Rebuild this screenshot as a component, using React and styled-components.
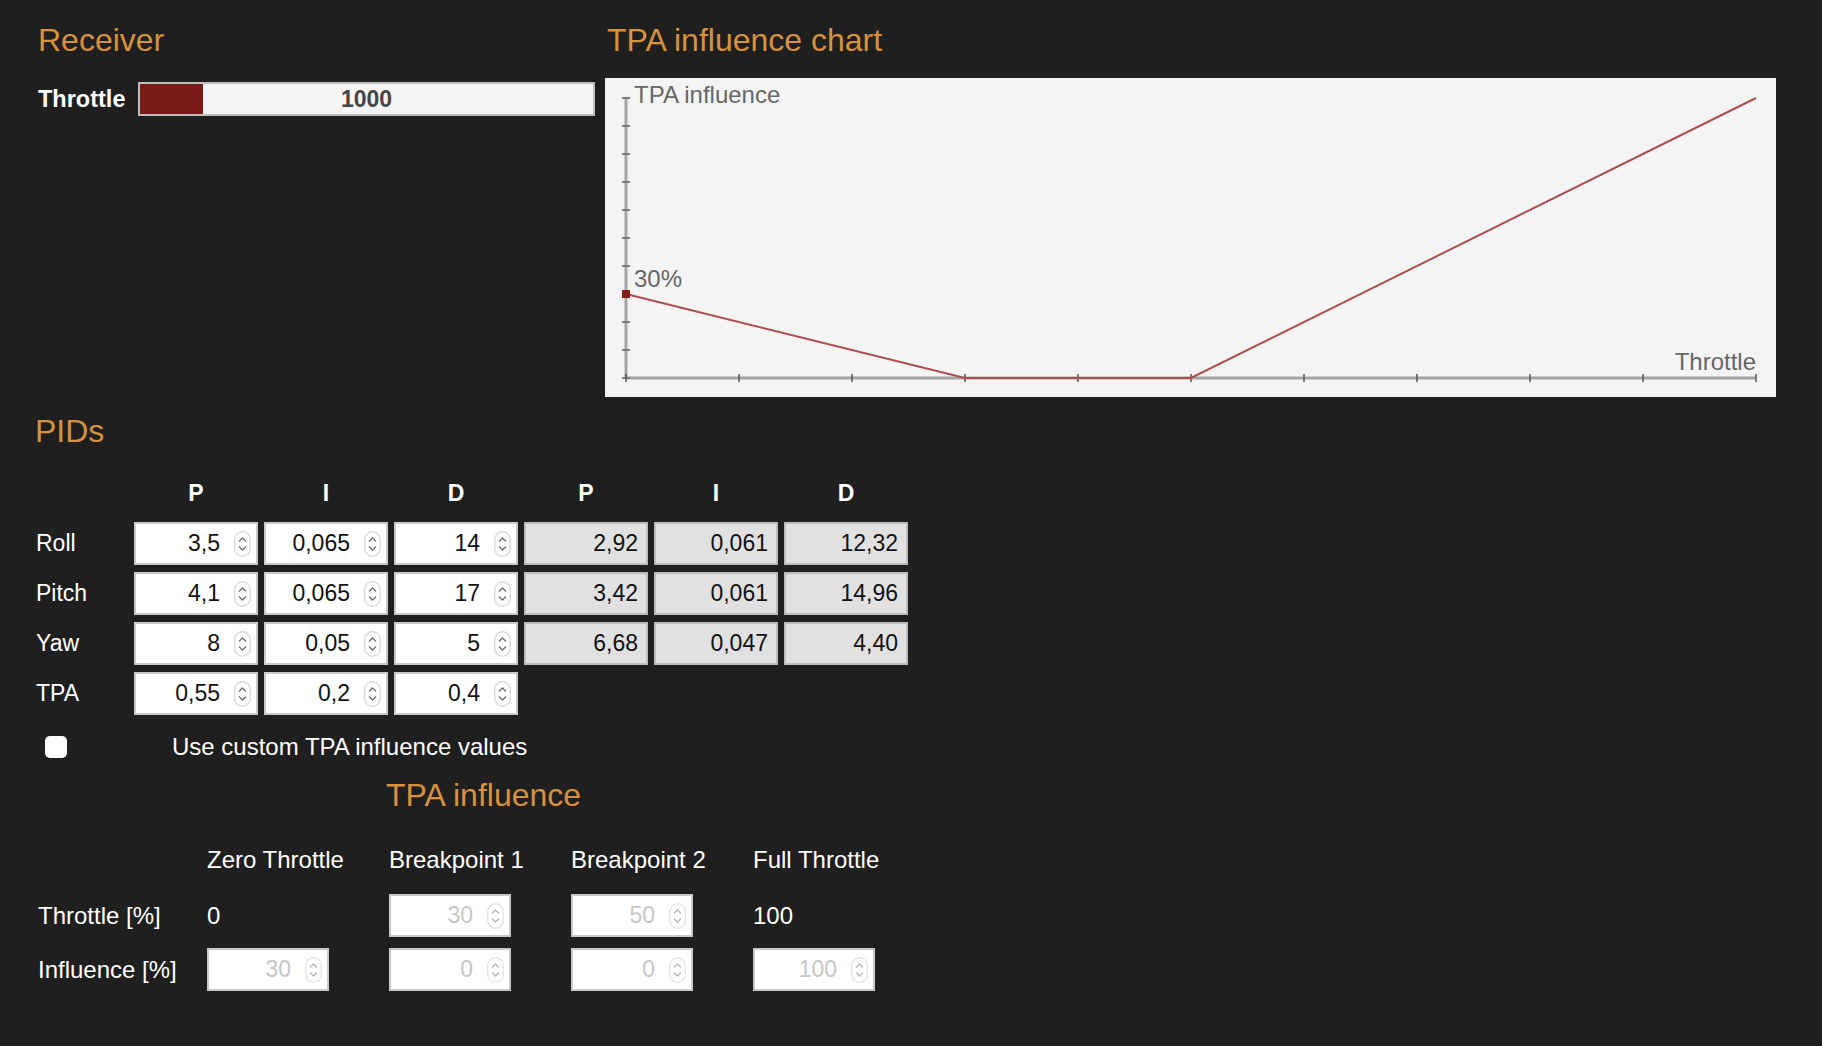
import React from 'react';
import styled, { createGlobalStyle } from 'styled-components';

const GlobalStyle = createGlobalStyle`
    body {
        margin: 0;
        background: #1f1f1f;
        color: #ffffff;
        font-family: "Liberation Sans", Arial, sans-serif;
    }
`;

const Page = styled.div`
    padding: 20px 0 20px 36px;
`;

const TopRow = styled.div`
    display: flex;
    align-items: flex-start;
`;

const ReceiverPanel = styled.section`
    width: 559px;
`;

const ChartPanel = styled.section`
    margin-left: 10px;
    width: 1171px;
`;

const Heading = styled.h2`
    margin: ${p => p.$top || 0}px 0 0 ${p => p.$left || 0}px;
    font-size: 32px;
    font-weight: 400;
    line-height: 40px;
    color: #d8913f;
`;

const ThrottleRow = styled.div`
    display: flex;
    align-items: center;
    margin-top: 22px;
`;

const BarLabel = styled.span`
    width: 100px;
    padding-left: 2px;
    font-size: 23.5px;
    font-weight: 700;
`;

const Bar = styled.div`
    position: relative;
    flex: 1;
    display: flex;
    height: 34px;
    box-sizing: border-box;
    border: 2px solid #bdbdbd;
    background: #f4f4f4;
`;

const BarFill = styled.div`
    height: 100%;
    background: #781a16;
`;

const BarValue = styled.span`
    position: absolute;
    inset: 0;
    display: flex;
    align-items: center;
    justify-content: center;
    font-size: 23px;
    font-weight: 700;
    color: #454545;
`;

const ChartBox = styled.div`
    margin-top: 18px;
    height: 319px;
    background: #f4f4f4;

    svg {
        display: block;
    }
`;

const PidGrid = styled.div`
    display: grid;
    grid-template-columns: 92px repeat(6, 124px);
    grid-template-rows: 40px repeat(4, 43px);
    column-gap: 6px;
    row-gap: 7px;
    margin-top: 24px;
`;

const HeadCell = styled.div`
    font-size: ${p => (p.$bold ? 23 : 24)}px;
    font-weight: ${p => (p.$bold ? 700 : 400)};
    line-height: ${p => p.$line || 36}px;
    text-align: ${p => p.$align || 'center'};
    white-space: nowrap;
`;

const RowLabel = styled.div`
    display: flex;
    align-items: center;
    padding-left: ${p => p.$pad || 0}px;
    font-size: ${p => p.$size || 23}px;
    white-space: nowrap;
`;

const NumberBox = styled.div`
    display: flex;
    align-items: center;
    justify-content: flex-end;
    box-sizing: border-box;
    height: 43px;
    padding-right: ${p => (p.$computed ? 8 : 5)}px;
    border: 2px solid ${p => (p.$computed ? '#bcbcbc' : '#c9c9c9')};
    background: ${p => (p.$computed ? '#e1e1e1' : '#ffffff')};
    color: ${p => (p.$disabled ? '#c6c6c6' : '#111111')};
    font-size: 23px;
`;

const BoxValue = styled.span`
    margin-right: ${p => (p.$spin ? 14 : 0)}px;
`;

const CheckRow = styled.label`
    display: flex;
    align-items: center;
    margin-top: 18px;
    padding-left: 9px;
    font-size: 24px;
`;

const CheckSquare = styled.span`
    width: 22px;
    height: 22px;
    margin-right: 105px;
    border-radius: 5px;
    background: #ffffff;
`;

const InfluenceGrid = styled.div`
    display: grid;
    grid-template-columns: 111px repeat(4, 122px);
    grid-template-rows: 37px 43px 43px;
    column-gap: 60px;
    row-gap: 11px;
    margin-top: 31px;
`;

const PlainValue = styled.div`
    display: flex;
    align-items: center;
    font-size: 24px;
`;

function Spinner({ faded }) {
    const stroke = faded ? '#b5b5b5' : '#6f6f6f';
    return (
        <svg width="17" height="26" viewBox="0 0 17 26">
            <rect x="0.75" y="0.75" width="15.5" height="24.5" rx="7.75" fill="#fff" stroke={faded ? '#e6e6e6' : '#dcdcdc'} strokeWidth="1.5" />
            <polyline points="5,10.5 8.5,7 12,10.5" fill="none" stroke={stroke} strokeWidth="1.3" />
            <polyline points="5,15.5 8.5,19 12,15.5" fill="none" stroke={stroke} strokeWidth="1.3" />
        </svg>
    );
}

function NumberField({ value, computed, disabled }) {
    return (
        <NumberBox $computed={computed} $disabled={disabled}>
            <BoxValue $spin={!computed}>{value}</BoxValue>
            {!computed && <Spinner faded={disabled} />}
        </NumberBox>
    );
}

function TpaChart() {
    const ox = 21;
    const oy = 300;
    const xStep = 113;
    const yStep = 28;
    const ticks = Array.from({ length: 11 }, (_, i) => i);
    const points = [
        [0, 30],
        [30, 0],
        [50, 0],
        [100, 100],
    ].map(([t, v]) => `${ox + t * xStep / 10},${oy - v * yStep / 10}`).join(' ');

    return (
        <svg width="1171" height="319" viewBox="0 0 1171 319">
            <line x1={ox} y1={20} x2={ox} y2={oy} stroke="#a3a3a3" strokeWidth="3" />
            <line x1={ox} y1={oy} x2={ox + 10 * xStep} y2={oy} stroke="#a3a3a3" strokeWidth="3" />
            {ticks.map(i => (
                <line key={'y' + i} x1={ox - 4} y1={oy - i * yStep} x2={ox + 4} y2={oy - i * yStep} stroke="#7a7a7a" strokeWidth="2" />
            ))}
            {ticks.map(i => (
                <line key={'x' + i} x1={ox + i * xStep} y1={oy - 4} x2={ox + i * xStep} y2={oy + 4} stroke="#555" strokeWidth="1.5" />
            ))}
            <polyline points={points} fill="none" stroke="#ad4d4d" strokeWidth="2" />
            <rect x={ox - 4} y={oy - 3 * yStep - 4} width="8" height="8" fill="#8a1a1a" />
            <g fill="#666" fontFamily="Liberation Sans, Arial, sans-serif" fontSize="24">
                <text x="29" y="25">TPA influence</text>
                <text x="29" y="209">30%</text>
                <text x={ox + 10 * xStep} y="292" textAnchor="end">Throttle</text>
            </g>
        </svg>
    );
}

const pidRows = [
    { name: 'Roll', set: ['3,5', '0,065', '14'], out: ['2,92', '0,061', '12,32'] },
    { name: 'Pitch', set: ['4,1', '0,065', '17'], out: ['3,42', '0,061', '14,96'] },
    { name: 'Yaw', set: ['8', '0,05', '5'], out: ['6,68', '0,047', '4,40'] },
    { name: 'TPA', set: ['0,55', '0,2', '0,4'], out: [] },
];

function App() {
    const throttle = 1000;
    const fillWidth = ((throttle - 860) / 1000) * 100;

    return (
        <Page>
            <GlobalStyle />
            <TopRow>
                <ReceiverPanel>
                    <Heading $left={2}>Receiver</Heading>
                    <ThrottleRow>
                        <BarLabel>Throttle</BarLabel>
                        <Bar>
                            <BarFill style={{ width: `${fillWidth}%` }} />
                            <BarValue>{throttle}</BarValue>
                        </Bar>
                    </ThrottleRow>
                </ReceiverPanel>
                <ChartPanel>
                    <Heading $left={2}>TPA influence chart</Heading>
                    <ChartBox>
                        <TpaChart />
                    </ChartBox>
                </ChartPanel>
            </TopRow>

            <Heading $top={14} $left={-1}>PIDs</Heading>
            <PidGrid>
                <div />
                {['P', 'I', 'D', 'P', 'I', 'D'].map((h, i) => (
                    <HeadCell key={i} $bold>{h}</HeadCell>
                ))}
                {pidRows.map(row => (
                    <React.Fragment key={row.name}>
                        <RowLabel>{row.name}</RowLabel>
                        {row.set.map((v, i) => (
                            <NumberField key={'s' + i} value={v} />
                        ))}
                        {row.out.map((v, i) => (
                            <NumberField key={'o' + i} value={v} computed />
                        ))}
                    </React.Fragment>
                ))}
            </PidGrid>

            <CheckRow>
                <CheckSquare />
                Use custom TPA influence values
            </CheckRow>

            <Heading $top={14} $left={350}>TPA influence</Heading>
            <InfluenceGrid>
                <div />
                <HeadCell $align="left" $line={28}>Zero Throttle</HeadCell>
                <HeadCell $align="left" $line={28}>Breakpoint 1</HeadCell>
                <HeadCell $align="left" $line={28}>Breakpoint 2</HeadCell>
                <HeadCell $align="left" $line={28}>Full Throttle</HeadCell>

                <RowLabel $pad={2} $size={24}>Throttle [%]</RowLabel>
                <PlainValue>0</PlainValue>
                <NumberField value="30" disabled />
                <NumberField value="50" disabled />
                <PlainValue>100</PlainValue>

                <RowLabel $pad={2} $size={24}>Influence [%]</RowLabel>
                <NumberField value="30" disabled />
                <NumberField value="0" disabled />
                <NumberField value="0" disabled />
                <NumberField value="100" disabled />
            </InfluenceGrid>
        </Page>
    );
}

export default App;
